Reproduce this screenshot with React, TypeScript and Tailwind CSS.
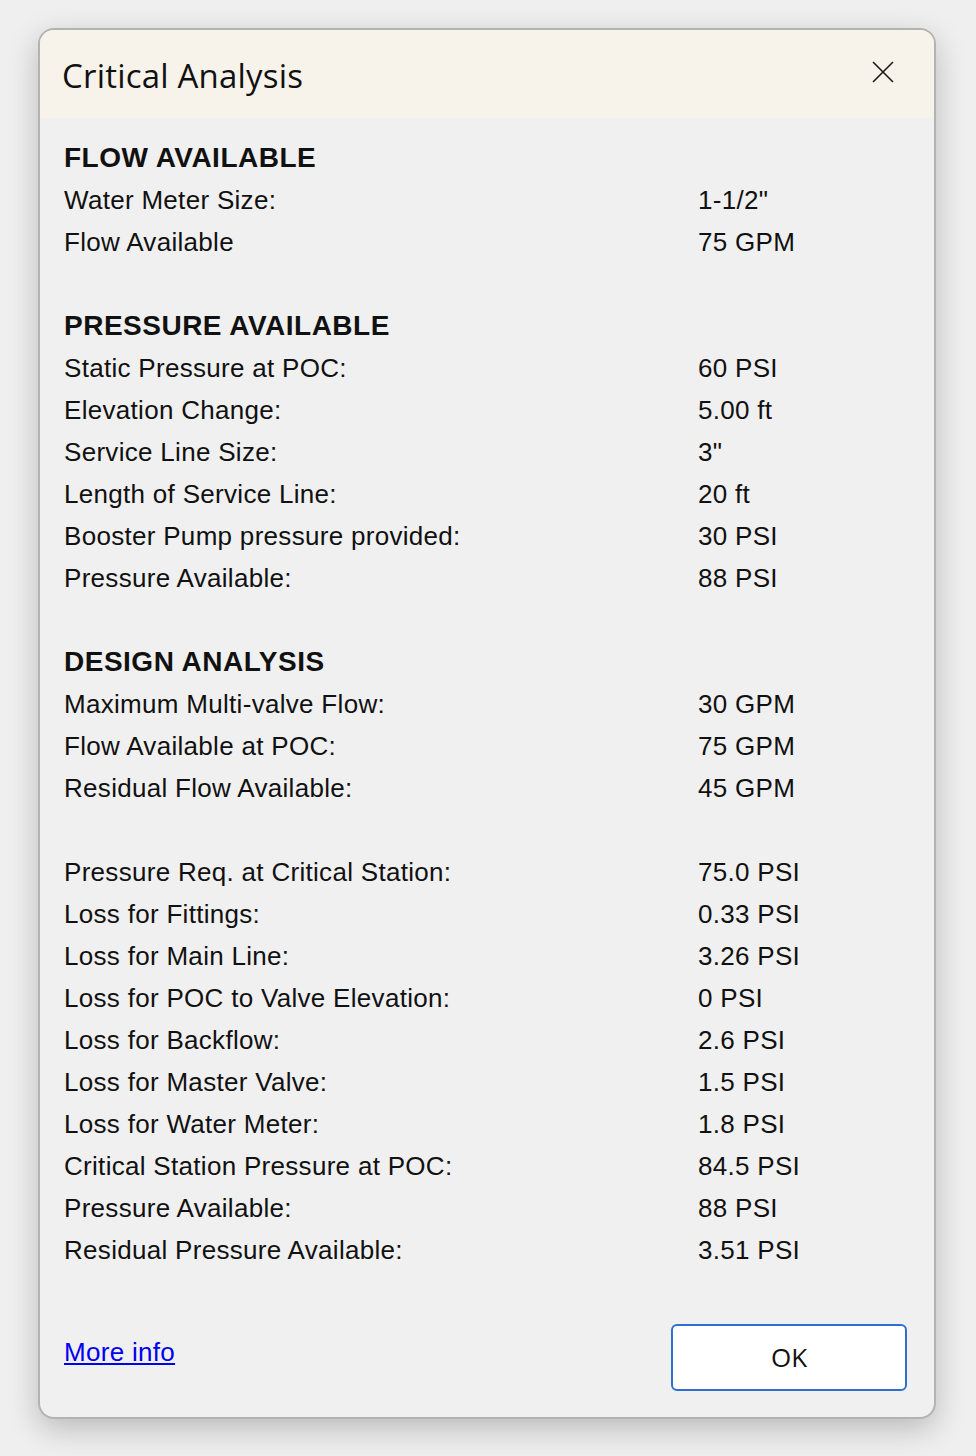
import React from "react";

type Row = { k?: string; v?: string; h?: string };

const rows: Row[] = [
  { h: "FLOW AVAILABLE" },
  { k: "Water Meter Size:", v: '1-1/2"' },
  { k: "Flow Available", v: "75 GPM" },
  {},
  { h: "PRESSURE AVAILABLE" },
  { k: "Static Pressure at POC:", v: "60 PSI" },
  { k: "Elevation Change:", v: "5.00 ft" },
  { k: "Service Line Size:", v: '3"' },
  { k: "Length of Service Line:", v: "20 ft" },
  { k: "Booster Pump pressure provided:", v: "30 PSI" },
  { k: "Pressure Available:", v: "88 PSI" },
  {},
  { h: "DESIGN ANALYSIS" },
  { k: "Maximum Multi-valve Flow:", v: "30 GPM" },
  { k: "Flow Available at POC:", v: "75 GPM" },
  { k: "Residual Flow Available:", v: "45 GPM" },
  {},
  { k: "Pressure Req. at Critical Station:", v: "75.0 PSI" },
  { k: "Loss for Fittings:", v: "0.33 PSI" },
  { k: "Loss for Main Line:", v: "3.26 PSI" },
  { k: "Loss for POC to Valve Elevation:", v: "0 PSI" },
  { k: "Loss for Backflow:", v: "2.6 PSI" },
  { k: "Loss for Master Valve:", v: "1.5 PSI" },
  { k: "Loss for Water Meter:", v: "1.8 PSI" },
  { k: "Critical Station Pressure at POC:", v: "84.5 PSI" },
  { k: "Pressure Available:", v: "88 PSI" },
  { k: "Residual Pressure Available:", v: "3.51 PSI" },
];

export default function App() {
  return (
    <div className="w-[976px] h-[1456px] bg-[#efefef] pl-[38px] pt-[28px] overflow-hidden">
      <div className="w-[898px] rounded-[16px] border-2 border-[#b3b3b3] bg-[#f0f0f0] overflow-hidden shadow-[0_10px_30px_rgba(0,0,0,0.22)]">
        <div className="h-[88px] bg-[#f8f3ea] flex items-center justify-between pl-[22px] pr-[40px]">
          <span className="text-[33px] text-[#111] font-['Open_Sans','Noto_Sans',sans-serif] leading-none mt-[2px] tracking-[0.2px]">
            Critical Analysis
          </span>
          <svg width="22" height="22" viewBox="0 0 22 22" className="mb-[4px]">
            <path d="M1 1 L21 21 M21 1 L1 21" stroke="#1a1a1a" strokeWidth="1.6" fill="none" />
          </svg>
        </div>
        <div className="pt-[19px] px-[24px] font-['Liberation_Sans',Arial,sans-serif] text-[#111]">
          {rows.map((r, i) =>
            r.h ? (
              <div key={i} className="h-[42px] leading-[42px] text-[28px] font-bold tracking-[0.5px]">
                {r.h}
              </div>
            ) : r.k ? (
              <div key={i} className="h-[42px] leading-[42px] text-[26px] grid grid-cols-[634px_1fr] tracking-[0.3px]">
                <span>{r.k}</span>
                <span>{r.v}</span>
              </div>
            ) : (
              <div key={i} className="h-[42px]" />
            )
          )}
        </div>
        <div className="flex items-center justify-between pl-[24px] pr-[27px] pt-[53px] pb-[26px]">
          <a
            href="#"
            className="text-[26px] text-[#0000ee] underline font-['Liberation_Sans',Arial,sans-serif] mb-[10px] tracking-[0.3px]"
          >
            More info
          </a>
          <button className="w-[236px] h-[67px] rounded-[6px] border-2 border-[#2f6fcf] bg-white text-[26px] text-[#111] font-['Open_Sans','Noto_Sans',sans-serif]">
            OK
          </button>
        </div>
      </div>
    </div>
  );
}
